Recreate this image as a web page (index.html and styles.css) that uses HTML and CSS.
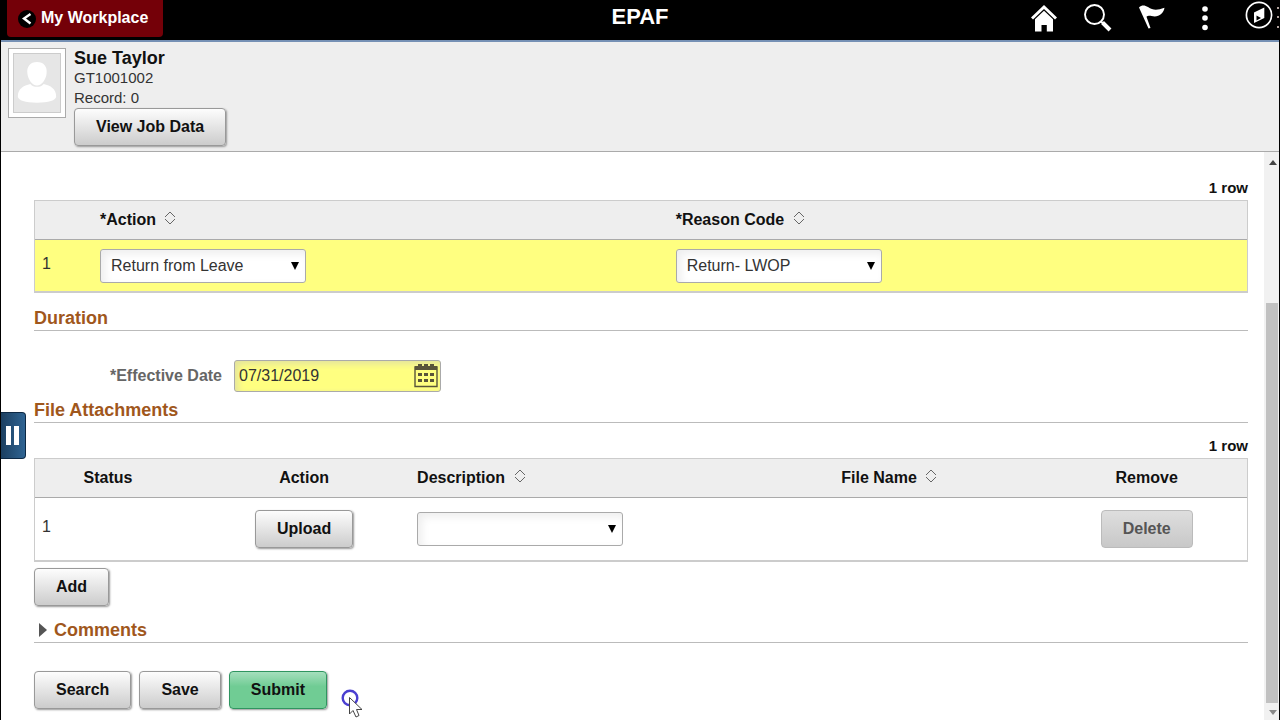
FILE: index.html
```html
<!DOCTYPE html>
<html lang="en">

<head>
	<meta charset="UTF-8">
	<title>EPAF</title>
	<link rel="stylesheet" href="styles.css">
</head>

<body>
	<header class="banner">
		<div class="banner-side">
			<button type="button" class="back-button">
				<svg width="18" height="18" viewBox="0 0 18 18" aria-hidden="true">
					<circle cx="9" cy="9" r="9" fill="#000" />
					<path d="M12.500 4 L6 8.500 L12.500 13.500" fill="none" stroke="#fff" stroke-width="2.400" />
				</svg>
				My Workplace
			</button>
		</div>
		<h1>EPAF</h1>
		<nav class="banner-side banner-icons">
			<button type="button" class="icon-button" aria-label="Home">
				<svg width="26" height="28" viewBox="0 0 26 28">
					<path d="M13 1 L0 13.500 L2 15.500 L13 5 L24 15.500 L26 13.500 Z" fill="#fff" />
					<path d="M13 6.700 L4 15.300 V27.500 H10.500 V21 H15.800 V27.500 H22 V15.300 Z" fill="#fff" />
				</svg>
			</button>
			<button type="button" class="icon-button" aria-label="Search">
				<svg width="28" height="28" viewBox="0 0 28 28">
					<circle cx="10.500" cy="10.500" r="9.500" fill="none" stroke="#fff" stroke-width="1.900" />
					<path d="M16.500 17.500 L19 19" stroke="#fff" stroke-width="2" />
					<path d="M18.500 18.500 L26 26" stroke="#fff" stroke-width="4" />
				</svg>
			</button>
			<button type="button" class="icon-button" aria-label="Notifications">
				<svg width="26" height="26" viewBox="0 0 26 26">
					<path d="M0 3.500 C3 0.500 6 1.500 9 3 C14 6.300 18 6.500 25.500 3.700 C24.500 10 19 13.800 12.500 12 C10.500 11.500 8.500 11.800 7.500 12.800 L11.500 24 L9.500 24.600 Z" fill="#fff" />
				</svg>
			</button>
			<button type="button" class="icon-button" aria-label="Actions">
				<svg width="26" height="28" viewBox="0 0 26 28">
					<g fill="#fff">
						<circle cx="13" cy="5" r="2.800" />
						<circle cx="13" cy="14" r="2.800" />
						<circle cx="13" cy="23.500" r="2.800" />
					</g>
				</svg>
			</button>
			<button type="button" class="icon-button" aria-label="NavBar">
				<svg width="34" height="32" viewBox="0 0 34 32">
					<circle cx="14" cy="15" r="12.600" fill="none" stroke="#fff" stroke-width="1.700" />
					<path d="M9 12.500 L19.300 7.500 V18 L9 23 Z" fill="#fff" />
					<path d="M11.500 15.500 L16 18 L11.500 20.500 Z" fill="#000" />
					<g fill="#b0a09c">
						<rect x="32" y="7" width="2" height="2" />
						<rect x="32" y="16" width="2" height="2" />
						<rect x="32" y="26" width="2" height="2" />
					</g>
				</svg>
			</button>
		</nav>
	</header>

	<section class="employee">
		<div class="photo">
			<svg width="48" height="60" viewBox="0 0 48 60" aria-hidden="true">
				<g fill="#fff">
					<path d="M24 8 C31 8 35 13 34 20 C33.500 26 29 32.500 24 32.500 C19 32.500 14.500 26 14 20 C13 13 17 8 24 8 Z" />
					<path d="M17 31 C20 35 28 35 31 31 C38 32.500 44 36 44 44 C44 48 36 50.500 24 50.500 C12 50.500 4 48 4 44 C4 36 10 32.500 17 31 Z" />
				</g>
			</svg>
		</div>
		<div class="employee-info">
			<h2>Sue Taylor</h2>
			<p>GT1001002</p>
			<p>Record: 0</p>
			<button type="button" class="button">View Job Data</button>
		</div>
	</section>

	<div class="page">
		<main class="content">
			<p class="row-count">1 row</p>
			<table class="grid grid-actions">
				<colgroup>
					<col class="col-number">
					<col class="col-action-type">
					<col>
				</colgroup>
				<thead>
					<tr>
						<th></th>
						<th>*Action <svg class="sort" width="12" height="14" viewBox="0 0 12 14"><path d="M1 6 L6 1 L11 6 M1 8 L6 13 L11 8" /></svg></th>
						<th>*Reason Code <svg class="sort" width="12" height="14" viewBox="0 0 12 14"><path d="M1 6 L6 1 L11 6 M1 8 L6 13 L11 8" /></svg></th>
					</tr>
				</thead>
				<tbody>
					<tr>
						<td class="number">1</td>
						<td>
							<div class="select">
								<select aria-label="Action">
									<option>Return from Leave</option>
								</select>
							</div>
						</td>
						<td>
							<div class="select">
								<select aria-label="Reason Code">
									<option>Return- LWOP</option>
								</select>
							</div>
						</td>
					</tr>
				</tbody>
			</table>

			<h2 class="section-title">Duration</h2>
			<div class="form-group">
				<label for="effectiveDate">*Effective Date</label>
				<div class="date-field">
					<input type="text" id="effectiveDate" value="07/31/2019">
					<button type="button" class="icon-button" aria-label="Calendar">
						<svg width="24" height="24" viewBox="0 0 24 24">
							<path d="M1 3 H23 V22.500 H1 Z" fill="none" stroke="#59543a" stroke-width="1.400" />
							<g fill="#59543a">
								<rect x="1" y="2" width="22" height="4" />
								<rect x="4" y="0" width="4" height="4" />
								<rect x="10" y="0" width="4" height="4" />
								<rect x="16" y="0" width="4" height="4" />
								<rect x="4" y="9" width="4" height="3" />
								<rect x="10" y="9" width="4" height="3" />
								<rect x="16" y="9" width="4" height="3" />
								<rect x="4" y="15" width="4" height="3" />
								<rect x="10" y="15" width="4" height="3" />
								<rect x="16" y="15" width="4" height="3" />
							</g>
						</svg>
					</button>
				</div>
			</div>

			<h2 class="section-title">File Attachments</h2>
			<p class="row-count">1 row</p>
			<table class="grid grid-files">
				<colgroup>
					<col class="col-index">
					<col class="col-status">
					<col class="col-upload">
					<col class="col-description">
					<col class="col-file">
					<col>
				</colgroup>
				<thead>
					<tr>
						<th></th>
						<th class="status">Status</th>
						<th class="center">Action</th>
						<th>Description <svg class="sort" width="12" height="14" viewBox="0 0 12 14"><path d="M1 6 L6 1 L11 6 M1 8 L6 13 L11 8" /></svg></th>
						<th>File Name <svg class="sort" width="12" height="14" viewBox="0 0 12 14"><path d="M1 6 L6 1 L11 6 M1 8 L6 13 L11 8" /></svg></th>
						<th class="center">Remove</th>
					</tr>
				</thead>
				<tbody>
					<tr>
						<td class="number">1</td>
						<td></td>
						<td class="center"><button type="button" class="button">Upload</button></td>
						<td>
							<div class="select">
								<select aria-label="Description">
									<option></option>
								</select>
							</div>
						</td>
						<td></td>
						<td class="center"><button type="button" class="button" disabled>Delete</button></td>
					</tr>
				</tbody>
			</table>
			<button type="button" class="button">Add</button>

			<h2 class="section-title comments-title">
				<button type="button" class="toggle" aria-expanded="false">Comments</button>
			</h2>
			<div class="button-row">
				<button type="button" class="button">Search</button>
				<button type="button" class="button">Save</button>
				<button type="button" class="button button-submit">Submit</button>
			</div>
		</main>
		<div class="scrollbar">
			<span class="arrow-up"></span>
			<span class="thumb"></span>
			<span class="arrow-down"></span>
		</div>
	</div>

	<button type="button" class="side-tab" aria-label="Open side panel"><span></span><span></span></button>

	<svg class="pointer" width="24" height="30" viewBox="0 0 24 30" aria-hidden="true">
		<circle cx="9" cy="9" r="7.300" fill="none" stroke="#4a3fd0" stroke-width="2.400" />
		<path d="M8.500 8.500 V25 L12 21.500 L15 28 L18 26.500 L15.500 20.500 H21 Z" fill="#fff" stroke="#444" stroke-width="1" />
	</svg>
</body>

</html>
```
FILE: styles.css
```css
* {
	box-sizing: border-box;
}

body {
	display: flex;
	flex-direction: column;
	height: 100vh;
	margin: 0;
	overflow: hidden;
	border-left: 1px solid #000;
	border-right: 1px solid #000;
	background-color: #fff;
	color: #111;
	font-family: "Liberation Sans", Arial, sans-serif;
	font-size: 16px;
}

h1,
h2,
p {
	margin: 0;
}

button,
input,
select {
	font-family: inherit;
	font-size: 16px;
}

/* banner */
.banner {
	display: flex;
	flex: none;
	height: 42px;
	border-bottom: 2px solid #7590b4;
	background-color: #000;
	color: #fff;
}

.banner h1 {
	font-size: 22px;
	line-height: 34px;
}

.banner-side {
	flex: 1;
}

.back-button {
	display: flex;
	align-items: center;
	gap: 5px;
	height: 37px;
	margin-left: 6px;
	padding: 0 15px 2px 11px;
	border: none;
	border-radius: 0 0 4px 4px;
	background-color: #740008;
	color: #fff;
	font-weight: bold;
}

.back-button svg {
	margin-top: 3px;
}

.banner-icons {
	display: flex;
	justify-content: flex-end;
	gap: 27px;
	padding-top: 4px;
}

.icon-button {
	display: flex;
	align-items: flex-start;
	padding: 0;
	border: none;
	background: none;
}

.banner-icons .icon-button:last-child {
	margin-top: -4px;
}

/* employee band */
.employee {
	display: flex;
	flex: none;
	gap: 8px;
	height: 110px;
	padding: 6px 7px;
	border-bottom: 1px solid #aaa;
	background-color: #eee;
}

.photo {
	align-self: flex-start;
	padding: 4px;
	border: 1px solid #aaa;
	background-color: #fff;
}

.photo svg {
	display: block;
	border: 1px solid #ccc;
	background-color: #e6e6e6;
}

.employee-info h2 {
	font-size: 18px;
	line-height: 20px;
}

.employee-info p {
	color: #333;
	font-size: 15px;
	line-height: 20px;
}

.button {
	height: 38px;
	padding: 0 21px;
	border: 1px solid #999;
	border-radius: 4px;
	background: linear-gradient(#fdfdfd, #ccc);
	box-shadow: 1px 1px 2px #999;
	color: #111;
	font-weight: bold;
}

.button:disabled {
	border-color: #bbb;
	background: linear-gradient(#dedede, #c8c8c8);
	box-shadow: none;
	color: #555;
}

.button-submit {
	border-color: #2f9560;
	background: linear-gradient(#a5dfbd, #70cc94 40%, #70cc94);
}

/* scrolling page */
.page {
	display: flex;
	flex: 1;
	min-height: 0;
}

.content {
	flex: 1;
	overflow: hidden;
	padding: 26px 16px 0 33px;
}

.scrollbar {
	display: flex;
	flex-direction: column;
	align-items: center;
	width: 15px;
	padding: 8px 0 5px;
	background-color: #f1f1f1;
}

.arrow-up,
.arrow-down {
	margin-left: 3px;
	border: 4px solid transparent;
}

.arrow-up {
	border-top: none;
	border-bottom: 5px solid #444;
}

.arrow-down {
	border-top: 5px solid #888;
	border-bottom: none;
}

.thumb {
	width: 12px;
	height: 72%;
	margin: auto 0 7px;
	background-color: #c1c1c1;
}

.row-count {
	margin-bottom: 2px;
	font-size: 15px;
	font-weight: bold;
	line-height: 20px;
	text-align: right;
}

/* grids */
.grid {
	width: 100%;
	table-layout: fixed;
	border-collapse: separate;
	border-spacing: 0;
	border: 1px solid #ccc;
	border-bottom: 2px solid #ccc;
}

.grid th {
	height: 39px;
	padding: 0 7px;
	border-bottom: 1px solid #aaa;
	background-color: #eee;
	text-align: left;
}

.grid td {
	padding: 0 7px;
}

.grid .center {
	text-align: center;
}

.grid .status {
	padding: 0 40px 0 0;
	text-align: center;
}

.grid .number {
	padding-bottom: 4px;
	color: #333;
}

.grid-actions td {
	height: 51px;
	background-color: #ffff80;
}

.grid-files td {
	height: 62px;
}

.col-number {
	width: 58px;
}

.col-action-type {
	width: 47.5%;
}

.col-index {
	width: 23px;
}

.col-status {
	width: 140px;
}

.col-upload,
.col-file {
	width: 17.5%;
}

.col-description {
	width: 35%;
}

.sort {
	margin-left: 4px;
	fill: none;
	stroke: #666;
	stroke-width: 1px;
}

.select {
	position: relative;
	width: 206px;
}

.select::after {
	content: "";
	position: absolute;
	top: 13px;
	right: 7px;
	border: 4px solid transparent;
	border-top: 8px solid #000;
	border-bottom: none;
	pointer-events: none;
}

.select select {
	display: block;
	width: 100%;
	height: 34px;
	padding: 0 10px;
	appearance: none;
	border: 1px solid #aaa;
	border-radius: 3px;
	background-color: #fff;
	box-shadow: inset 4px 4px 8px #eee;
	color: #333;
}

/* sections */
.section-title {
	margin-top: 13px;
	border-bottom: 1px solid #bbb;
	color: #a0571c;
	font-size: 18px;
	line-height: 24px;
}

.section-title + .row-count {
	margin-top: 13px;
}

.form-group {
	display: flex;
	align-items: center;
	gap: 12px;
	margin: 29px 0 -7px;
}

.form-group label {
	width: 188px;
	color: #666;
	font-weight: bold;
	text-align: right;
}

.date-field {
	display: flex;
	align-items: center;
	width: 207px;
	height: 32px;
	padding: 0 2px 0 4px;
	border: 1px solid #aaa;
	border-radius: 3px;
	background-color: #ffff80;
	box-shadow: inset 3px 3px 7px #e2e2a0;
}

.date-field input {
	flex: 1;
	min-width: 0;
	padding: 0;
	border: none;
	background: none;
	color: #333;
}

.grid-files + .button {
	display: block;
	margin-top: 6px;
}

.comments-title {
	margin-top: 12px;
}

.toggle {
	display: flex;
	align-items: center;
	gap: 7px;
	padding: 0 5px;
	border: none;
	background: none;
	color: inherit;
	font-size: 18px;
	font-weight: bold;
	line-height: 24px;
}

.toggle::before {
	content: "";
	border: 7px solid transparent;
	border-left: 8px solid #555;
	border-right: none;
}

.button-row {
	display: flex;
	gap: 8px;
	margin-top: 28px;
}

.side-tab {
	position: absolute;
	top: 412px;
	left: 1px;
	display: flex;
	align-items: center;
	gap: 3px;
	width: 25px;
	height: 47px;
	padding: 0 5px;
	border: 1px solid #0c2844;
	border-left: none;
	border-radius: 0 4px 4px 0;
	background: linear-gradient(90deg, #1c3f60, #2f6493);
}

.side-tab span {
	width: 5px;
	height: 19px;
	background-color: #fff;
}

.pointer {
	position: absolute;
	top: 689px;
	left: 341px;
	pointer-events: none;
}
```
